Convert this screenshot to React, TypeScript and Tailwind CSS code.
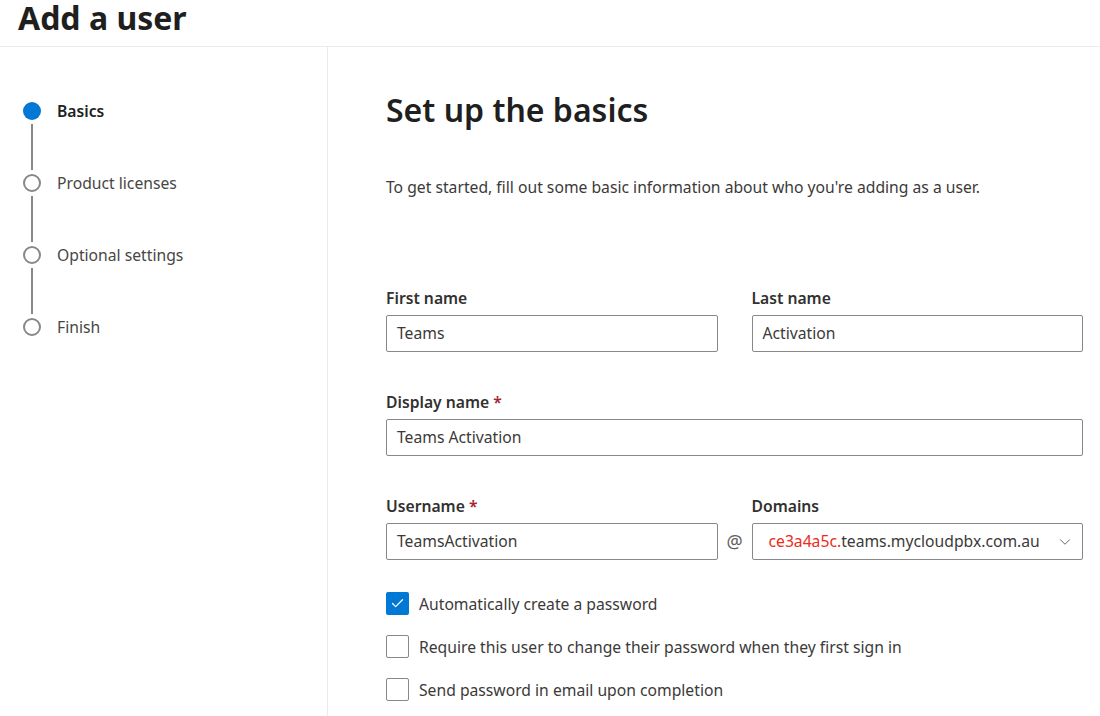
import { ChevronDown, Check } from 'lucide-react';

const steps = [
  { label: 'Basics', active: true },
  { label: 'Product licenses', active: false },
  { label: 'Optional settings', active: false },
  { label: 'Finish', active: false },
];

function Stepper() {
  return (
    <div className="flex flex-col pl-[23px] pt-[55px]">
      {steps.map((step, i) => (
        <div key={step.label} className="flex gap-[16px]">
          <div className="flex w-[18px] flex-col items-center">
            {step.active ? (
              <div className="h-[18px] w-[18px] rounded-full bg-[#0078d4]" />
            ) : (
              <div className="h-[18px] w-[18px] rounded-full border-2 border-[#8a8886] bg-white" />
            )}
            {i < steps.length - 1 && <div className="my-[4px] h-[46px] w-[2px] bg-[#8a8886]" />}
          </div>
          <span
            className={
              step.active
                ? 'text-[15.7px] leading-[18px] font-semibold text-[#201f1e]'
                : 'text-[15.7px] leading-[18px] text-[#484644]'
            }
          >
            {step.label}
          </span>
        </div>
      ))}
    </div>
  );
}

function Field({ label, value, required }: { label: string; value: string; required?: boolean }) {
  return (
    <div className="flex flex-col gap-[7px]">
      <label className="text-[15.7px] leading-[20px] font-semibold text-[#323130]">
        {label}
        {required && <span className="text-[#a4262c]"> *</span>}
      </label>
      <div className="flex h-[37px] items-center rounded-[2px] border border-[#8a8886] bg-white px-[10px] text-[15.7px] text-[#3b3a39]">
        {value}
      </div>
    </div>
  );
}

function CheckRow({ label, checked }: { label: string; checked?: boolean }) {
  return (
    <label className="flex items-center gap-[10px]">
      {checked ? (
        <span className="flex h-[23px] w-[23px] items-center justify-center rounded-[2px] bg-[#0078d4]">
          <Check size={15} strokeWidth={2} className="text-white" />
        </span>
      ) : (
        <span className="h-[23px] w-[23px] rounded-[2px] border border-[#8a8886] bg-white" />
      )}
      <span className="text-[15.7px] leading-[20px] text-[#3b3a39]">{label}</span>
    </label>
  );
}

export default function App() {
  return (
    <div
      className="flex h-[716px] w-[1100px] flex-col overflow-hidden bg-white text-[#323130]"
      style={{ fontFamily: '"Segoe UI", "Noto Sans", "Open Sans", sans-serif' }}
    >
      <header className="h-[47px] shrink-0 border-b border-[#edebe9] pl-[18px]">
        <h1 className="text-[32px] leading-[36px] font-bold text-[#201f1e]">Add a user</h1>
      </header>

      <div className="flex flex-1">
        <aside className="w-[328px] shrink-0 border-r border-[#edebe9]">
          <Stepper />
        </aside>

        <main className="flex-1 pl-[58px] pr-[17px] pt-[44px]">
          <h2 className="text-[32px] leading-[38px] font-semibold text-[#201f1e]">Set up the basics</h2>
          <p className="mt-[48px] text-[15.7px] leading-[20px] text-[#3b3a39]">
            To get started, fill out some basic information about who you're adding as a user.
          </p>

          <div className="mt-[91px] flex flex-col gap-[40px]">
            <div className="grid grid-cols-2 gap-[34px]">
              <Field label="First name" value="Teams" />
              <Field label="Last name" value="Activation" />
            </div>
            <Field label="Display name" value="Teams Activation" required />
            <div className="flex items-end">
              <div className="flex-1">
                <Field label="Username" value="TeamsActivation" required />
              </div>
              <span className="flex h-[37px] w-[34px] items-center justify-center text-[18px] text-[#605e5c]">@</span>
              <div className="flex flex-1 flex-col gap-[7px]">
                <label className="text-[15.7px] leading-[20px] font-semibold text-[#323130]">Domains</label>
                <div className="flex h-[37px] items-center justify-between rounded-[2px] border border-[#8a8886] bg-white pl-[16px] pr-[8px] text-[15.7px]">
                  <span>
                    <span className="text-[#ea2d1b]">ce3a4a5c.</span>
                    <span className="text-[#3b3a39]">teams.mycloudpbx.com.au</span>
                  </span>
                  <ChevronDown size={18} strokeWidth={1.25} className="text-[#605e5c]" />
                </div>
              </div>
            </div>
          </div>

          <div className="mt-[32px] flex flex-col gap-[20px]">
            <CheckRow label="Automatically create a password" checked />
            <CheckRow label="Require this user to change their password when they first sign in" />
            <CheckRow label="Send password in email upon completion" />
          </div>
        </main>
      </div>
    </div>
  );
}
